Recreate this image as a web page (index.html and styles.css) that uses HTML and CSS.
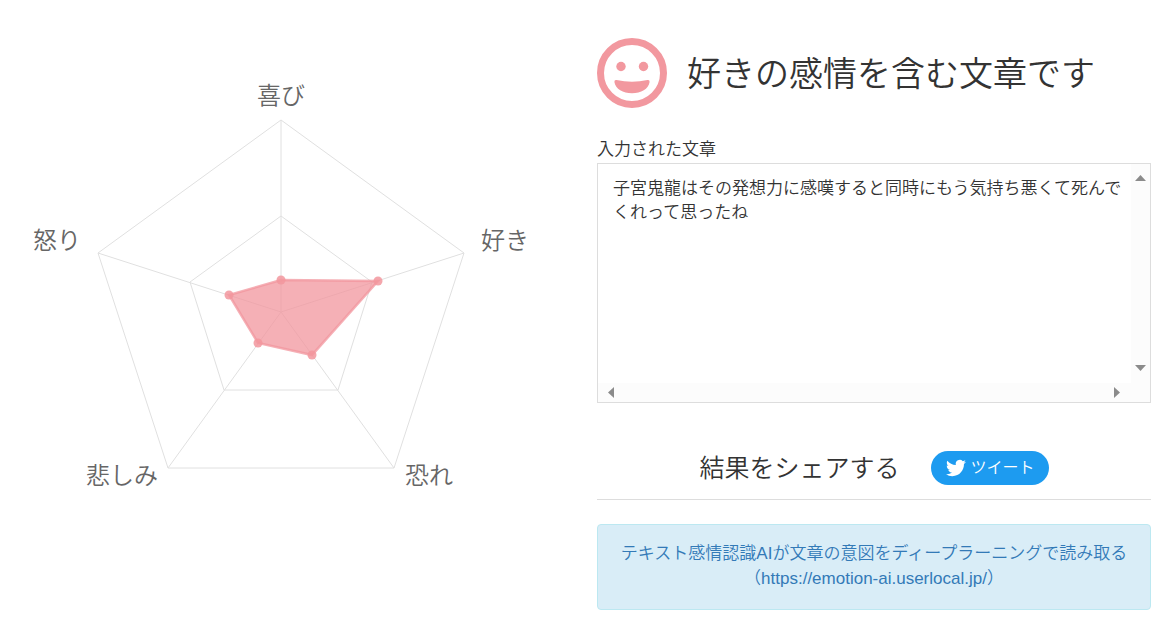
FILE: index.html
```html
<!DOCTYPE html>
<html lang="ja">
<head>
    <meta charset="UTF-8">
    <meta name="viewport" content="width=device-width, initial-scale=1.0">
    <title>テキスト感情認識AI</title>
    <link rel="stylesheet" href="styles.css">
</head>
<body>
    <main class="container">
        <div class="chart">
            <!-- origin is the centre of the radar -->
            <svg viewBox="-264 -274 554 472" role="img" aria-label="感情レーダーチャート">
                <g class="grid">
                    <polygon points="0,-192 183,-59 113,156 -113,156 -183,-59"/>
                    <polygon points="0,-96 91,-30 57,78 -57,78 -91,-30"/>
                    <path d="M0 0V-192M0 0L183 -59M0 0L113 156M0 0L-113 156M0 0L-183 -59"/>
                </g>
                <polygon class="area" points="0,-32 97,-31 31,43 -23,31 -52,-17"/>
                <g class="points">
                    <circle cx="0" cy="-32" r="4.5"/>
                    <circle cx="97" cy="-31" r="4.5"/>
                    <circle cx="31" cy="43" r="4.5"/>
                    <circle cx="-23" cy="31" r="4.5"/>
                    <circle cx="-52" cy="-17" r="4.5"/>
                </g>
                <g class="labels">
                    <text x="0" y="-208" text-anchor="middle">喜び</text>
                    <text x="200" y="-63">好き</text>
                    <text x="124" y="172">恐れ</text>
                    <text x="-123" y="172" text-anchor="end">悲しみ</text>
                    <text x="-200" y="-63" text-anchor="end">怒り</text>
                </g>
            </svg>
        </div>

        <div class="result">
            <div class="result-title">
                <svg class="face" viewBox="0 0 70 70" aria-hidden="true">
                    <circle class="face-ring" cx="35" cy="35" r="31.5"/>
                    <circle cx="24" cy="28.5" r="4.7"/>
                    <circle cx="46.5" cy="28.5" r="4.7"/>
                    <path d="M19.5 42Q35 45.5 50.5 42Q52.8 41.6 52.6 44C51.5 51 44 55.3 35 55.3S18.5 51 17.4 44Q17.2 41.6 19.5 42Z"/>
                </svg>
                <h1>好きの感情を含む文章です</h1>
            </div>

            <label for="input-text">入力された文章</label>
            <div class="text-frame">
                <textarea id="input-text" readonly>子宮鬼龍はその発想力に感嘆すると同時にもう気持ち悪くて死んでくれって思ったね</textarea>
                <div class="track track-y">
                    <button type="button" class="arrow" aria-label="上へ"><svg width="11" height="6" viewBox="0 0 11 6"><path d="M0 6L5.5 0L11 6Z"/></svg></button>
                    <button type="button" class="arrow" aria-label="下へ"><svg width="11" height="6" viewBox="0 0 11 6"><path d="M0 0H11L5.5 6Z"/></svg></button>
                </div>
                <div class="track track-x">
                    <button type="button" class="arrow" aria-label="左へ"><svg width="6" height="11" viewBox="0 0 6 11"><path d="M6 0V11L0 5.5Z"/></svg></button>
                    <button type="button" class="arrow" aria-label="右へ"><svg width="6" height="11" viewBox="0 0 6 11"><path d="M0 0L6 5.5L0 11Z"/></svg></button>
                </div>
                <div class="corner"></div>
            </div>

            <div class="share">
                <h2>結果をシェアする</h2>
                <a class="tweet" href="#">
                    <svg width="20" height="20" viewBox="0 0 24 24" aria-hidden="true"><path d="M23.95 4.57a10 10 0 0 1-2.82.77 4.96 4.96 0 0 0 2.16-2.72c-.95.55-2 .96-3.13 1.18a4.92 4.92 0 0 0-8.38 4.48C7.69 8.1 4.07 6.13 1.64 3.16a4.82 4.82 0 0 0-.66 2.48c0 1.71.87 3.21 2.19 4.1a4.9 4.9 0 0 1-2.23-.62v.06a4.92 4.92 0 0 0 3.95 4.83 5 5 0 0 1-2.21.08 4.94 4.94 0 0 0 4.6 3.42A9.87 9.87 0 0 1 0 19.54a13.99 13.99 0 0 0 7.55 2.21c9.05 0 14-7.5 14-13.98 0-.21 0-.42-.02-.63a9.94 9.94 0 0 0 2.46-2.55z"/></svg>
                    ツイート
                </a>
            </div>

            <div class="alert">
                <a href="#">テキスト感情認識AIが文章の意図をディープラーニングで読み取る<br>（https://emotion-ai.userlocal.jp/）</a>
            </div>
        </div>
    </main>
</body>
</html>
```
FILE: styles.css
```css
* {
    box-sizing: border-box;
}

body {
    margin: 0;
    background: #fff;
    color: #333;
    font-family: "Liberation Sans", "Noto Sans CJK JP", sans-serif;
    font-size: 17px;
    font-weight: 350;
    line-height: 24px;
}

.container {
    display: grid;
    grid-template-columns: 1fr 1fr;
    gap: 26px;
    padding: 38px 17px 19px;
}

.chart svg {
    display: block;
    width: 100%;
}

.grid {
    fill: none;
    stroke: #e0e0e0;
    stroke-width: 1;
}

.area {
    fill: #f2969e;
    fill-opacity: 0.75;
    stroke: #f2969e;
    stroke-opacity: 0.75;
    stroke-width: 2.5;
}

.points {
    fill: #f2969e;
    fill-opacity: 0.85;
}

.labels {
    fill: #666;
    font-size: 24px;
}

h1,
h2 {
    margin: 0;
    font-weight: 350;
}

.result-title {
    display: flex;
    align-items: center;
    gap: 20px;
    margin-bottom: 30px;
}

.result-title h1 {
    padding-top: 2px;
    font-size: 34px;
    line-height: 40px;
}

.face {
    flex: none;
    width: 70px;
    height: 70px;
    fill: #f2989f;
}

.face-ring {
    fill: none;
    stroke: #f2989f;
    stroke-width: 7;
}

.result label {
    display: block;
    margin-bottom: 1px;
}

.text-frame {
    display: grid;
    grid-template-columns: 1fr 19px;
    grid-template-rows: 219px 19px;
    border: 1px solid #ddd;
}

.text-frame textarea {
    width: 100%;
    padding: 13px 8px 13px 15px;
    border: 0;
    outline: none;
    resize: none;
    overflow: hidden;
    background: #fff;
    color: inherit;
    font: inherit;
}

.track,
.corner {
    background: #fcfcfc;
}

.track {
    display: flex;
    align-items: center;
    justify-content: space-between;
}

.track-y {
    flex-direction: column;
    padding: 11px 0 12px;
}

.track-x {
    padding: 0 11px 0 10px;
}

.arrow {
    display: flex;
    padding: 0;
    border: 0;
    background: none;
    cursor: pointer;
}

.arrow svg {
    fill: #8b8b8b;
}

.share {
    display: flex;
    align-items: center;
    justify-content: center;
    gap: 31px;
    margin: 48px 0 24px;
    padding-bottom: 14px;
    border-bottom: 1px solid #ddd;
}

.share h2 {
    font-size: 25px;
    line-height: 34px;
}

.tweet {
    display: flex;
    align-items: center;
    gap: 5px;
    height: 34px;
    padding: 0 14px 0 15px;
    border-radius: 17px;
    background: #1d9bf0;
    color: #fff;
    font-size: 16px;
    text-decoration: none;
}

.tweet svg {
    fill: #fff;
}

.alert {
    padding: 16px 10px 18px;
    border: 1px solid #bce8f1;
    border-radius: 4px;
    background: #d9edf7;
    line-height: 25px;
    text-align: center;
}

.alert a {
    color: #337ab7;
    text-decoration: none;
}
```
